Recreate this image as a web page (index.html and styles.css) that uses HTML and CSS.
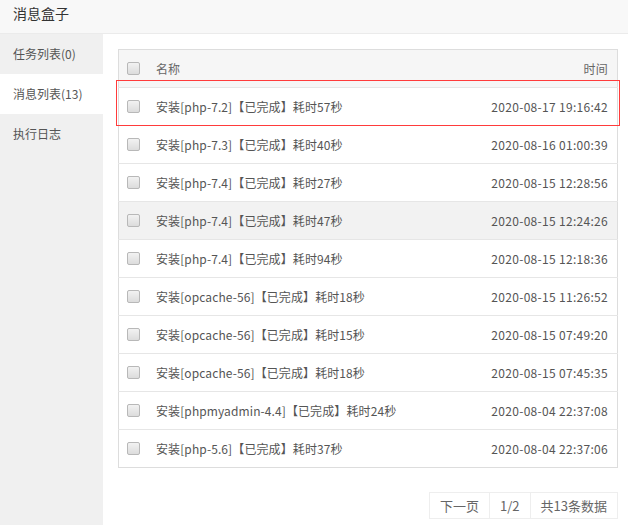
FILE: index.html
```html
<!DOCTYPE html>
<html lang="zh-CN">
<head>
<meta charset="utf-8">
<title>消息盒子</title>
<link rel="stylesheet" href="styles.css">
</head>
<body>
<div class="titlebar">消息盒子</div>
<div class="main">
  <div class="sidebar">
    <div class="tab">任务列表(0)</div>
    <div class="tab active">消息列表(13)</div>
    <div class="tab">执行日志</div>
  </div>
  <div class="content">
    <div class="table-wrap">
      <table class="list">
        <thead>
          <tr>
            <th class="c-check"><span class="cb"></span></th>
            <th class="c-name">名称</th>
            <th class="c-time">时间</th>
          </tr>
        </thead>
        <tbody>
          <tr><td class="c-check"><span class="cb"></span></td><td class="c-name">安装[php-7.2]【已完成】耗时57秒</td><td class="c-time">2020-08-17 19:16:42</td></tr>
          <tr><td class="c-check"><span class="cb"></span></td><td class="c-name">安装[php-7.3]【已完成】耗时40秒</td><td class="c-time">2020-08-16 01:00:39</td></tr>
          <tr><td class="c-check"><span class="cb"></span></td><td class="c-name">安装[php-7.4]【已完成】耗时27秒</td><td class="c-time">2020-08-15 12:28:56</td></tr>
          <tr class="hover"><td class="c-check"><span class="cb"></span></td><td class="c-name">安装[php-7.4]【已完成】耗时47秒</td><td class="c-time">2020-08-15 12:24:26</td></tr>
          <tr><td class="c-check"><span class="cb"></span></td><td class="c-name">安装[php-7.4]【已完成】耗时94秒</td><td class="c-time">2020-08-15 12:18:36</td></tr>
          <tr><td class="c-check"><span class="cb"></span></td><td class="c-name">安装[opcache-56]【已完成】耗时18秒</td><td class="c-time">2020-08-15 11:26:52</td></tr>
          <tr><td class="c-check"><span class="cb"></span></td><td class="c-name">安装[opcache-56]【已完成】耗时15秒</td><td class="c-time">2020-08-15 07:49:20</td></tr>
          <tr><td class="c-check"><span class="cb"></span></td><td class="c-name">安装[opcache-56]【已完成】耗时18秒</td><td class="c-time">2020-08-15 07:45:35</td></tr>
          <tr><td class="c-check"><span class="cb"></span></td><td class="c-name">安装[phpmyadmin-4.4]【已完成】耗时24秒</td><td class="c-time">2020-08-04 22:37:08</td></tr>
          <tr><td class="c-check"><span class="cb"></span></td><td class="c-name">安装[php-5.6]【已完成】耗时37秒</td><td class="c-time">2020-08-04 22:37:06</td></tr>
        </tbody>
      </table>
      <div class="highlight"></div>
    </div>
    <div class="pager">
      <span class="pg">下一页</span>
      <span class="pg">1/2</span>
      <span class="pg">共13条数据</span>
    </div>
  </div>
</div>
</body>
</html>
```
FILE: styles.css
```css
html, body {
  margin: 0;
  padding: 0;
  background: #fff;
}
body {
  font-family: "Noto Sans CJK SC", "Noto Sans", sans-serif;
  font-size: 12px;
  color: #555;
  width: 628px;
  height: 525px;
  overflow: hidden;
}
.titlebar {
  height: 33px;
  line-height: 27px;
  padding-left: 13px;
  font-size: 14px;
  color: #333;
  background: #f8f8f8;
  border-bottom: 1px solid #ebebeb;
}
.main {
  display: flex;
  height: 491px;
}
.sidebar {
  width: 103px;
  flex: none;
  background: #f0f0f0;
}
.tab {
  height: 40px;
  line-height: 40px;
  padding-left: 13px;
  font-size: 12px;
  color: #555;
}
.tab.active {
  background: #fff;
}
.content {
  flex: 1;
  padding: 15px 10px 0 15px;
}
.table-wrap {
  position: relative;
}
.list {
  width: 100%;
  border-collapse: collapse;
  border: 1px solid #ddd;
}
.list th, .list td {
  height: 37px;
  padding: 0;
  border-top: 1px solid #e6e6e6;
  font-weight: normal;
  vertical-align: middle;
}
.list thead th {
  background: #f6f6f6;
  color: #666;
  border-top: none;
}
.list tr.hover td {
  background: #f2f2f2;
}
.c-check {
  width: 29px;
  padding-left: 8px !important;
  text-align: left;
}
.c-name {
  text-align: left;
  color: #555;
  letter-spacing: 0.1px;
}
.c-time {
  text-align: right;
  padding-right: 9px !important;
  color: #555;
  letter-spacing: 0.3px;
}
.cb {
  display: block;
  width: 11px;
  height: 11px;
  border: 1px solid #b8b8b8;
  border-radius: 2px;
  background: linear-gradient(#f2f2f2, #dcdcdc);
}
.highlight {
  position: absolute;
  left: -2px;
  top: 31px;
  width: 502px;
  height: 44px;
  border: 1px solid #ff3b3b;
  pointer-events: none;
}
.pager {
  display: flex;
  justify-content: flex-end;
  margin-top: 24px;
}
.pg {
  height: 25px;
  line-height: 25px;
  padding: 0 10px;
  font-size: 13px;
  color: #666;
  border: 1px solid #eee;
  margin-left: -1px;
}
```
